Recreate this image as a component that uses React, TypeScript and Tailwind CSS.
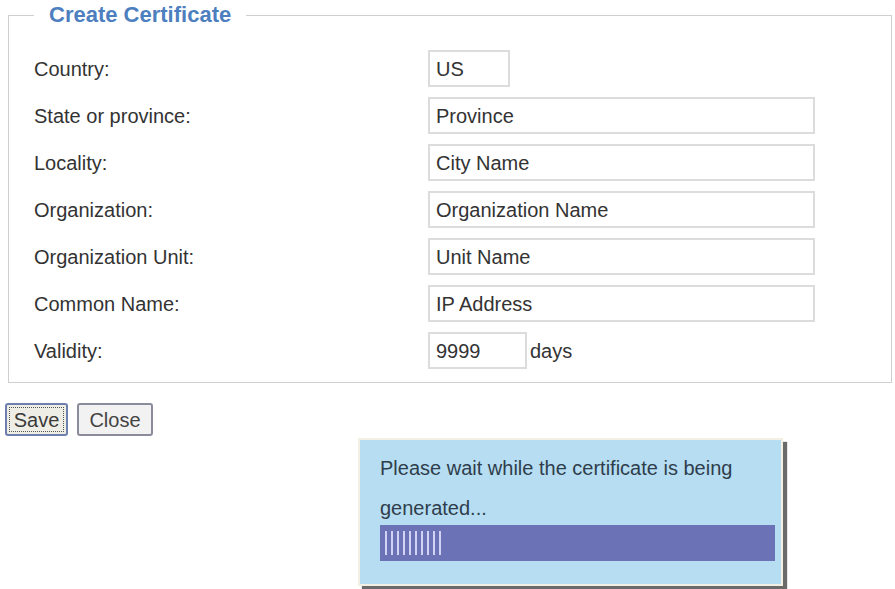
const FONT = { fontFamily: '"Liberation Sans", Arial, sans-serif' }

const rows: { label: string; value: string; width: string; suffix?: string }[] = [
  { label: 'Country:', value: 'US', width: 'w-[82px]' },
  { label: 'State or province:', value: 'Province', width: 'w-[387px]' },
  { label: 'Locality:', value: 'City Name', width: 'w-[387px]' },
  { label: 'Organization:', value: 'Organization Name', width: 'w-[387px]' },
  { label: 'Organization Unit:', value: 'Unit Name', width: 'w-[387px]' },
  { label: 'Common Name:', value: 'IP Address', width: 'w-[387px]' },
  { label: 'Validity:', value: '9999', width: 'w-[99px]', suffix: 'days' },
]

export default function App() {
  return (
    <div className="w-[895px] h-[589px] bg-white overflow-hidden text-[#333]" style={FONT}>
      <fieldset className="ml-2 mr-[3px] border border-[#cfcfcf] pl-[25px] pt-[23px] pb-[13px] mt-[3px]">
        <legend className="px-[15px] text-[22px] font-bold text-[#4d7fbf] leading-[24px]">Create Certificate</legend>
        <div className="flex flex-col gap-[10px]">
          {rows.map((r) => (
            <div key={r.label} className="flex items-center h-[37px]">
              <span className="w-[394px] shrink-0 text-[20px]">{r.label}</span>
              <div className={`${r.width} h-[37px] border-2 border-[#dcdcdc] flex items-center px-[6px] text-[20px]`}>
                {r.value}
              </div>
              {r.suffix && <span className="ml-[3px] text-[20px]">{r.suffix}</span>}
            </div>
          ))}
        </div>
      </fieldset>

      <div className="flex gap-[9px] ml-[5px] mt-[20px]">
        <button className="w-[63px] h-[33px] rounded-[3px] border-2 border-[#6f7fae] bg-[#eeeee6] p-[2px]">
          <span className="flex items-center justify-center w-full h-full border border-dotted border-[#555] text-[20px] text-[#3a3a3a]">Save</span>
        </button>
        <button className="w-[76px] h-[33px] rounded-[3px] border-2 border-[#8a8c9c] bg-[#f2f2f2] text-[20px] text-[#444]">
          Close
        </button>
      </div>

      <div className="ml-[358px] mt-[2px] w-[425px] h-[148px] border-2 border-[#f3efe3] bg-[#b6ddf2] shadow-[4px_4px_1px_#6a6a6a] pl-[20px] pr-[6px] pt-[8px]">
        <p className="text-[20px] leading-[40px] text-[#2f3d4c]">
          Please wait while the certificate is being generated...
        </p>
        <div className="mt-[-3px] h-[36px] bg-[#6b73b6] flex items-center pl-[5px] gap-[4px]">
          {Array.from({ length: 10 }).map((_, i) => (
            <div key={i} className="w-[2px] h-[24px] bg-[#d2d2f4]" />
          ))}
        </div>
      </div>
    </div>
  )
}
